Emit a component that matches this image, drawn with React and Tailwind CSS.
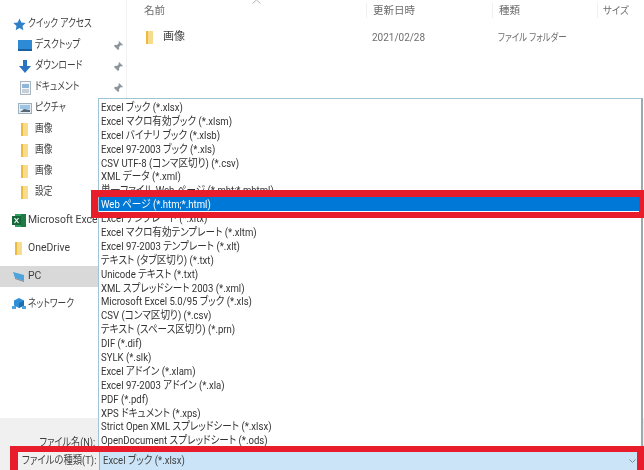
const font = { fontFamily: 'Roboto, "Noto Sans CJK JP", sans-serif' };

const fileTypes = [
  "Excel ブック (*.xlsx)",
  "Excel マクロ有効ブック (*.xlsm)",
  "Excel バイナリ ブック (*.xlsb)",
  "Excel 97-2003 ブック (*.xls)",
  "CSV UTF-8 (コンマ区切り) (*.csv)",
  "XML データ (*.xml)",
  "単一ファイル Web ページ (*.mht;*.mhtml)",
  "Web ページ (*.htm;*.html)",
  "Excel テンプレート (*.xltx)",
  "Excel マクロ有効テンプレート (*.xltm)",
  "Excel 97-2003 テンプレート (*.xlt)",
  "テキスト (タブ区切り) (*.txt)",
  "Unicode テキスト (*.txt)",
  "XML スプレッドシート 2003 (*.xml)",
  "Microsoft Excel 5.0/95 ブック (*.xls)",
  "CSV (コンマ区切り) (*.csv)",
  "テキスト (スペース区切り) (*.prn)",
  "DIF (*.dif)",
  "SYLK (*.slk)",
  "Excel アドイン (*.xlam)",
  "Excel 97-2003 アドイン (*.xla)",
  "PDF (*.pdf)",
  "XPS ドキュメント (*.xps)",
  "Strict Open XML スプレッドシート (*.xlsx)",
  "OpenDocument スプレッドシート (*.ods)",
];

const Folder = () => (
  <svg width="10" height="13" viewBox="0 0 10 13">
    <rect x="1" y="0" width="7" height="13" fill="#f8dc8e" />
    <rect x="1" y="0" width="2" height="13" fill="#eeb93f" />
  </svg>
);

const Star = () => (
  <svg width="13" height="13" viewBox="0 0 24 24">
    <path d="M12 1l3.4 7.3 7.9 1-5.800 5.400 1.500 7.800L12 18.600l-7 3.900 1.500-7.800L.7 9.300l7.900-1z" fill="#2f7fc9" />
  </svg>
);

const Desktop = () => (
  <svg width="14" height="11" viewBox="0 0 14 11">
    <rect width="14" height="11" fill="#2f8ad6" />
    <rect y="9" width="14" height="2" fill="#1a5f9e" />
  </svg>
);

const Download = () => (
  <svg width="12" height="13" viewBox="0 0 12 13">
    <path d="M4 0h4v6h4l-6 7-6-7h4z" fill="#2b74c4" />
  </svg>
);

const Doc = () => (
  <svg width="11" height="14" viewBox="0 0 11 14">
    <rect x=".5" y=".5" width="10" height="13" fill="#f4f7fa" stroke="#a9b6c2" />
    <rect x="2" y="3" width="7" height="4" fill="#8fb6d6" />
    <path d="M2 9h7M2 11h7" stroke="#9aa7b3" />
  </svg>
);

const Picture = () => (
  <svg width="14" height="11" viewBox="0 0 14 11">
    <rect x=".5" y=".5" width="13" height="10" fill="#e6eef4" stroke="#9fb0bd" />
    <rect x="2" y="2" width="10" height="4" fill="#9cc4e4" />
    <path d="M2 9l4-3 6 1v2z" fill="#55687a" />
  </svg>
);

const ExcelIcon = () => (
  <svg width="14" height="13" viewBox="0 0 14 13">
    <rect x="3" y="0" width="11" height="13" fill="#2f9e5f" />
    <rect x="9" y="0" width="5" height="13" fill="#1f7a45" />
    <rect x="0" y="2" width="9" height="9" fill="#17663a" />
    <path d="M2.500 4l4 5M6.500 4l-4 5" stroke="#fff" strokeWidth="1.200" />
  </svg>
);

const PcIcon = () => (
  <svg width="14" height="12" viewBox="0 0 14 12">
    <path d="M1 1l11 3v6L3 7z" fill="#4da3dc" />
    <path d="M3 7l9 3v1L3 8z" fill="#7d8b97" />
  </svg>
);

const Network = () => (
  <svg width="14" height="13" viewBox="0 0 14 13">
    <path d="M7 0l5 2.500v5L7 10 2 7.500v-5z" fill="#2f8fd8" />
    <path d="M7 5l5-2.500v5L7 10z" fill="#1e6fb0" />
    <rect x="0" y="8" width="4" height="3" fill="#4da3dc" />
    <rect x="10" y="8" width="4" height="3" fill="#4da3dc" />
  </svg>
);

const Pin = () => (
  <svg width="10" height="10" viewBox="0 0 10 10">
    <path d="M6 0l4 4-1 .5-1-.5-2 2 .2 2L5 9 3 7 .5 9.500 3 7 1 5l1-1.200 2 .2 2-2-.5-1z" fill="#8c959c" />
  </svg>
);

// kana in the original font runs narrower than Noto, so labels get squeezed
const NavRow = ({ icon, label, pin, active, indent, latin }) => (
  <div className={`flex items-center h-[21px] text-[11px] text-[#3f3f3f] ${active ? "bg-[#d9d9d9] w-[99px]" : ""}`}>
    <span className={`flex justify-center w-[16px] shrink-0 ${indent ? "ml-[17px]" : "ml-[11px]"}`}>{icon}</span>
    <span className={`whitespace-nowrap ${indent ? "ml-[2px] w-[78px]" : "ml-[1px]"}`}>
      <span className={`inline-block origin-left ${latin ? "scale-x-[0.95]" : "scale-x-[0.79]"}`}>{label}</span>
    </span>
    {pin && <Pin />}
  </div>
);

const Sidebar = () => (
  <div className="w-[127px] shrink-0 pt-[14px] border-r border-[#f2f2f2]">
    <NavRow icon={<Star />} label="クイック アクセス" />
    <NavRow indent icon={<Desktop />} label="デスクトップ" pin />
    <NavRow indent icon={<Download />} label="ダウンロード" pin />
    <NavRow indent icon={<Doc />} label="ドキュメント" pin />
    <NavRow indent icon={<Picture />} label="ピクチャ" />
    <NavRow indent icon={<Folder />} label="画像" />
    <NavRow indent icon={<Folder />} label="画像" />
    <NavRow indent icon={<Folder />} label="画像" />
    <NavRow indent icon={<Folder />} label="設定" />
    <div className="mt-[7px]">
      <NavRow latin icon={<ExcelIcon />} label="Microsoft Excel" />
    </div>
    <div className="mt-[7px]">
      <NavRow latin icon={<Folder />} label="OneDrive" />
    </div>
    <div className="mt-[7px]">
      <NavRow latin active icon={<PcIcon />} label="PC" />
    </div>
    <div className="mt-[7px]">
      <NavRow icon={<Network />} label="ネットワーク" />
    </div>
  </div>
);

const FileList = () => (
  <div className="flex-1 text-[10.5px] text-[#6d6d6d]">
    <div className="relative flex h-[21px] items-center">
      <svg className="absolute left-[125px] top-0" width="9" height="4" viewBox="0 0 9 4">
        <path d="M.5 3.500L4.500 0l4 3.500" fill="none" stroke="#b5b5b5" />
      </svg>
      <span className="w-[239px] pl-[17px]">名前</span>
      <span className="w-[126px] pl-[6px] border-l border-[#f0f0f0]">更新日時</span>
      <span className="w-[105px] pl-[6px] border-l border-[#f0f0f0]">種類</span>
      <span className="pl-[5px] border-l border-[#f0f0f0]">
        <span className="inline-block origin-left scale-x-[0.9]">サイズ</span>
      </span>
    </div>
    <div className="flex items-center h-[23px] mt-[5px]">
      <span className="flex w-[36px] pl-[18px] shrink-0">
        <Folder />
      </span>
      <span className="w-[203px] text-[11px] text-[#3f3f3f]">画像</span>
      <span className="w-[126px] pl-[6px]">
        <span className="inline-block origin-left scale-x-[0.95]">2021/02/28</span>
      </span>
      <span className="pl-[6px]">
        <span className="inline-block origin-left scale-x-[0.8]">ファイル フォルダー</span>
      </span>
    </div>
  </div>
);

const BottomBar = () => (
  <div className="h-[52px] bg-[#f0f0f0] text-[11px] text-[#3f3f3f]">
    <div className="h-[34px] flex items-end justify-end pr-[549px] pb-[1px]">
      <span className="inline-block origin-right scale-x-[0.83]">ファイル名(N):</span>
    </div>
    <div className="flex h-[18px] pl-[22px] items-center">
      <span className="w-[77px] whitespace-nowrap">
        <span className="inline-block origin-left scale-x-[0.85]">ファイルの種類(T):</span>
      </span>
      <div className="relative flex-1 h-[18px] mr-[7px] pl-[3px] flex items-center bg-[#cce4f7] border-l border-[#7eb4ea]">
        <span className="inline-block origin-left scale-x-[0.87]">Excel ブック (*.xlsx)</span>
        <svg className="absolute right-[1px] top-[7px]" width="7" height="5" viewBox="0 0 7 5">
          <path d="M.5.500l3 3 3-3" fill="none" stroke="#7a8a96" />
        </svg>
      </div>
    </div>
  </div>
);

export default function App() {
  return (
    <div style={font} className="relative w-[644px] h-[470px] overflow-hidden bg-white flex flex-col blur-[0.4px] [font-feature-settings:'palt']">
      <div className="flex flex-1 min-h-0">
        <Sidebar />
        <FileList />
      </div>
      <BottomBar />

      {/* open dropdown list */}
      <div className="absolute left-[98px] top-[98px] w-[545px] h-[349px] pt-[1px] bg-white border border-[#9fc4d6] border-r-2 border-r-[#9aa9b2] overflow-hidden">
        {fileTypes.map((t, i) => (
          <div
            key={t}
            className={`h-[13.900px] leading-[16px] pl-[2px] text-[11px] whitespace-nowrap ${
              i === 7 ? "bg-[#0078d7] text-white" : "text-[#333333]"
            }`}
          >
            <span className="inline-block origin-left scale-x-[0.87]">{t}</span>
          </div>
        ))}
      </div>

      {/* red annotation boxes */}
      <div className="absolute left-[91px] top-[190px] w-[553px] h-[28px] border-[#e81c2b] border-t-[7px] border-b-[6px] border-l-[7px] border-r-[5px]" />
      <div className="absolute left-[10px] top-[446px] w-[634px] h-[30px] border-[#e81c2b] border-t-[6px] border-l-[8px] border-r-[7px] border-b-[6px]" />
    </div>
  );
}
